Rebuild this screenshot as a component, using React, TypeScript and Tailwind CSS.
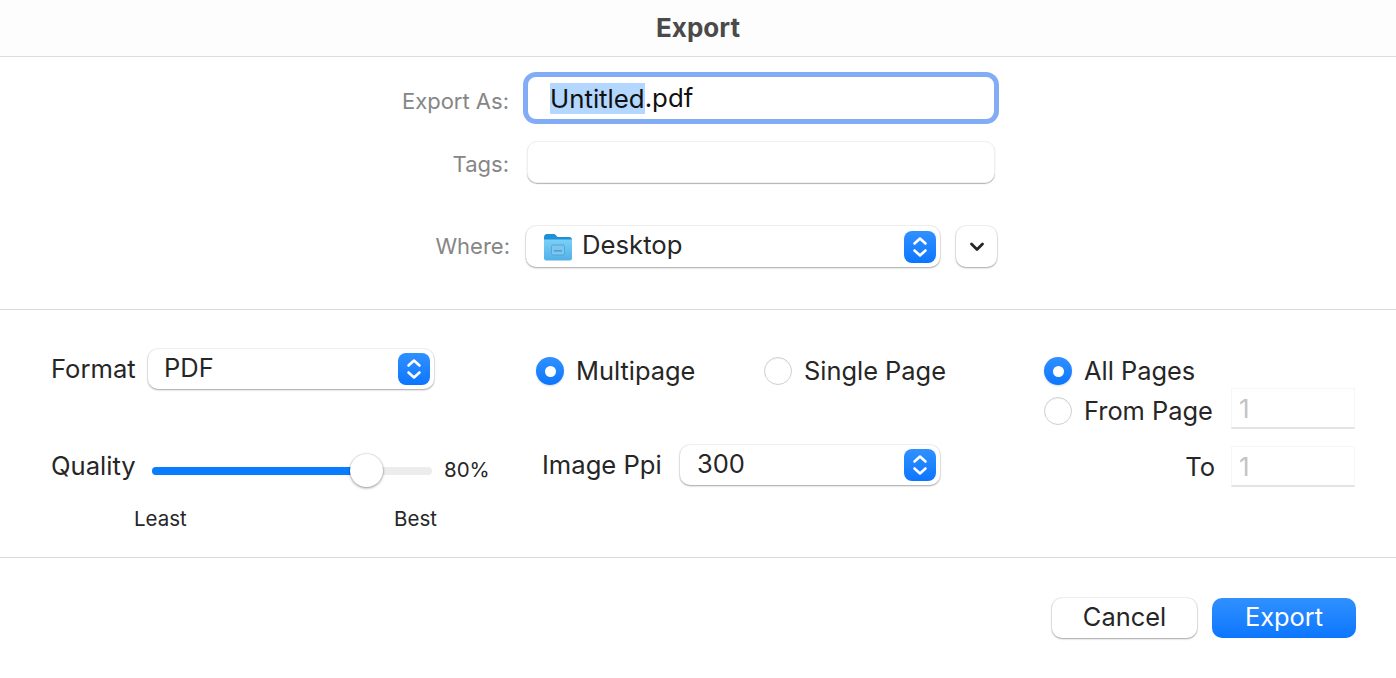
import React from "react";

function Stepper() {
  return (
    <span className="flex h-[32px] w-[32px] items-center justify-center rounded-[8px] bg-gradient-to-b from-[#2f90ff] to-[#0a76ff]">
      <svg width="20" height="24" viewBox="0 0 20 24" fill="none" stroke="#fff" strokeWidth="2.6" strokeLinecap="round" strokeLinejoin="round">
        <path d="M4.5 8.5 10 3.5l5.5 5" />
        <path d="M4.5 15.5 10 20.5l5.5-5" />
      </svg>
    </span>
  );
}

function Select({ label, className, children }: { label: string; className: string; children?: React.ReactNode }) {
  return (
    <div className={"flex items-center rounded-[10px] bg-white pr-[4px] text-[#262626] shadow-[0_1px_2px_rgba(0,0,0,0.32),0_0_0_1px_rgba(0,0,0,0.05)] " + className}>
      {children}
      <span className="flex-1 pb-[2px]">{label}</span>
      <Stepper />
    </div>
  );
}

function Radio({ checked }: { checked?: boolean }) {
  if (checked) {
    return (
      <span className="flex h-[28px] w-[28px] shrink-0 items-center justify-center rounded-full bg-gradient-to-b from-[#2f90ff] to-[#0a76ff] shadow-[0_1px_2px_rgba(0,0,0,0.15)]">
        <span className="h-[11px] w-[11px] rounded-full bg-white" />
      </span>
    );
  }
  return <span className="h-[28px] w-[28px] shrink-0 rounded-full border border-[#d0d0d0] bg-white shadow-[inset_0_1px_1px_rgba(0,0,0,0.05)]" />;
}

function RadioOption({ label, checked, className }: { label: string; checked?: boolean; className?: string }) {
  return (
    <div className={"flex items-center gap-[12px] text-[25.4px] text-[#262626] " + (className ?? "")}>
      <Radio checked={checked} />
      <span>{label}</span>
    </div>
  );
}

function PageField() {
  return (
    <div className="flex h-[41px] w-[124px] items-center border border-[#f6f6f6] border-b-2 border-b-[#e3e3e3] pl-[7px] text-[26px] text-[#c4c4c4]">
      1
    </div>
  );
}

function FolderIcon() {
  return (
    <svg width="30" height="30" viewBox="0 0 30 30" className="shrink-0">
      <defs>
        <linearGradient id="folderBody" x1="0" y1="0" x2="0" y2="1">
          <stop offset="0" stopColor="#7ad0f7" />
          <stop offset="1" stopColor="#52b0e8" />
        </linearGradient>
      </defs>
      <path d="M1 5.5Q1 2 4 2h6.5q1.5 0 2.5 1.2L14.5 5H26q3 0 3 3v4H1z" fill="#1f8fd6" />
      <path d="M1 7.5h28V26q0 2.5-2.5 2.5h-23Q1 28.5 1 26z" fill="url(#folderBody)" />
      <rect x="8.5" y="13" width="13" height="10" rx="1.5" fill="#7cc6ee" stroke="#4a9fd6" strokeWidth="0.8" />
      <rect x="11" y="18" width="8" height="1.6" fill="#4a9fd6" />
    </svg>
  );
}

export default function App() {
  return (
    <div className="min-h-[678px] bg-white font-['Inter','Liberation_Sans',sans-serif] antialiased">
      <header className="flex h-[57px] items-center justify-center border-b border-[#dcdcdc] bg-[#fdfdfd] pb-[2px] text-[26px] font-bold text-[#4a4a4a]">
        Export
      </header>

      <section className="flex h-[253px] flex-col border-b border-[#dcdcdc] pt-[15px]">
        <div className="flex items-center">
          <label className="w-[509px] pt-[6px] text-right text-[22px] text-[#868686]">Export As:</label>
          <div className="ml-[14px] flex h-[52px] w-[476px] items-center rounded-[13px] border-[5px] border-[#82adf5] bg-white pl-[22px] text-[25.8px] text-[#111]">
            <span className="bg-[#b3d7ff] leading-[31px]">Untitled</span>.pdf
          </div>
        </div>
        <div className="mt-[17px] flex items-center">
          <label className="w-[509px] pt-[4px] text-right text-[22px] text-[#868686]">Tags:</label>
          <div className="ml-[18px] h-[42px] w-[468px] rounded-[10px] border border-[#efefef] bg-white shadow-[0_1px_1px_rgba(0,0,0,0.3)]" />
        </div>
        <div className="mt-[43px] flex items-center">
          <label className="w-[510px] text-right text-[22px] text-[#868686]">Where:</label>
          <Select label="Desktop" className="ml-[16px] h-[41px] w-[414px] pl-[17px] text-[25.7px]">
            <span className="mr-[9px]"><FolderIcon /></span>
          </Select>
          <button className="ml-[16px] flex h-[41px] w-[41px] items-center justify-center rounded-[10px] bg-white shadow-[0_1px_2px_rgba(0,0,0,0.32),0_0_0_1px_rgba(0,0,0,0.05)]">
            <svg width="16" height="12" viewBox="0 0 16 12" fill="none" stroke="#262626" strokeWidth="2.8" strokeLinecap="round" strokeLinejoin="round">
              <path d="M2.5 3 8 8.5 13.5 3" />
            </svg>
          </button>
        </div>
      </section>

      <section className="grid h-[248px] grid-cols-[485px_508px_1fr] border-b border-[#dcdcdc] pl-[51px] pt-[39px] text-[#262626]">
        <div className="flex flex-col">
          <div className="flex items-center gap-[13px]">
            <span className="w-[84px] text-[25.6px]">Format</span>
            <Select label="PDF" className="h-[40px] w-[286px] pl-[16px] text-[25.5px]" />
          </div>
          <div className="mt-[57px] flex items-center">
            <span className="w-[101px] text-[25.6px]">Quality</span>
            <div className="relative mt-[10px] h-[8px] w-[280px] rounded-full bg-[#ececec]">
              <div className="h-[8px] w-[215px] rounded-full bg-[#0a7cff]" />
              <span className="absolute left-[198px] top-[-13px] h-[33px] w-[33px] rounded-full bg-white shadow-[0_1px_3px_rgba(0,0,0,0.4),0_0_0_1px_rgba(0,0,0,0.05)]" />
            </div>
            <span className="ml-[12px] mt-[9px] text-[20.5px]">80%</span>
          </div>
          <div className="mt-[18px] flex w-[386px] justify-between pl-[83px] text-[20.5px]">
            <span>Least</span>
            <span>Best</span>
          </div>
        </div>

        <div className="flex flex-col">
          <div className="flex items-center pt-[3px]">
            <RadioOption label="Multipage" checked className="w-[228px]" />
            <RadioOption label="Single Page" />
          </div>
          <div className="mt-[55px] flex items-center pl-[6px]">
            <span className="w-[138px] text-[25.6px]">Image Ppi</span>
            <Select label="300" className="h-[40px] w-[260px] pl-[17px] text-[25.5px]" />
          </div>
        </div>

        <div className="flex flex-col">
          <RadioOption label="All Pages" checked className="mt-[3px]" />
          <div className="-mt-[2px] flex items-center justify-between pr-[41px]">
            <RadioOption label="From Page" className="mt-[4px]" />
            <div className="self-start"><PageField /></div>
          </div>
          <div className="mt-[16px] flex items-center justify-end gap-[16px] pr-[41px]">
            <span className="text-[25.6px]">To</span>
            <PageField />
          </div>
        </div>
      </section>

      <footer className="flex justify-end gap-[15px] pr-[40px] pt-[40px] text-[25.4px]">
        <button className="h-[40px] w-[145px] rounded-[10px] bg-white pb-[3px] text-[#262626] shadow-[0_1px_2px_rgba(0,0,0,0.32),0_0_0_1px_rgba(0,0,0,0.06)]">
          Cancel
        </button>
        <button className="h-[40px] w-[144px] rounded-[10px] bg-gradient-to-b from-[#2f90ff] to-[#0a76ff] pb-[3px] text-white">
          Export
        </button>
      </footer>
    </div>
  );
}
